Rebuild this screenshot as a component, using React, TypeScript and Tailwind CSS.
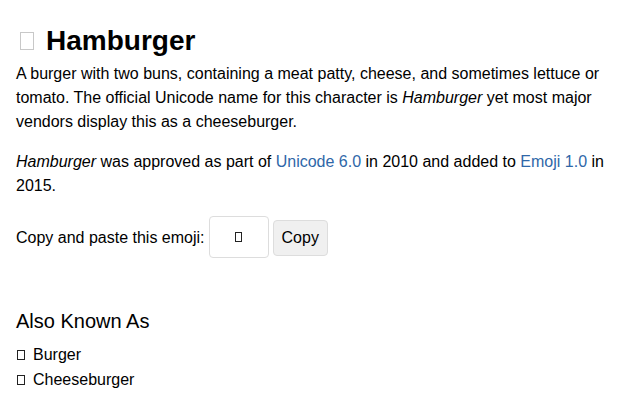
function Tofu({ className }: { className: string }) {
  return (
    <span className={"inline-block align-middle border bg-white relative overflow-hidden " + className}>
      <span className="sr-only">🍔</span>
    </span>
  );
}

export default function App() {
  return (
    <div className="px-4 pt-[21px] text-[16px] leading-6 text-black bg-white" style={{ fontFamily: "'Liberation Sans', Arial, sans-serif" }}>
      <h1 className="flex items-center text-[28px] font-bold leading-[40px] mb-[1px]">
        <Tofu className="w-[14px] h-[18px] border-[#c8c8c8] ml-[4px] mr-[12px]" />
        Hamburger
      </h1>
      <p className="mb-4">
        A burger with two buns, containing a meat patty, cheese, and sometimes lettuce or tomato. The official Unicode name for this character is <i>Hamburger</i> yet most major vendors display this as a cheeseburger.
      </p>
      <p className="mb-4">
        <i>Hamburger</i> was approved as part of <a className="text-[#2f67a8]">Unicode 6.0</a> in 2010 and added to <a className="text-[#2f67a8]">Emoji 1.0</a> in 2015.
      </p>
      <div className="flex items-center mt-[19px]">
        <span className="mr-[4px]">Copy and paste this emoji:</span>
        <div className="w-[60px] h-[42px] -mt-[1px] border border-[#dddddd] rounded-[4px] flex items-center justify-center">
          <Tofu className="w-[7px] h-[10px] border-[#222]" />
        </div>
        <button className="ml-[4px] h-[36px] px-[8px] border border-[#dddddd] rounded-[4px] bg-[#f0f0f0] text-[16px]">Copy</button>
      </div>
      <h2 className="text-[20px] leading-7 mt-[49px] mb-[7px]">Also Known As</h2>
      <ul>
        <li className="flex items-center leading-[25px]"><Tofu className="w-[8px] h-[10px] border-[#222] ml-[1px] mr-[8px]" />Burger</li>
        <li className="flex items-center leading-[25px]"><Tofu className="w-[8px] h-[10px] border-[#222] ml-[1px] mr-[8px]" />Cheeseburger</li>
      </ul>
    </div>
  );
}
